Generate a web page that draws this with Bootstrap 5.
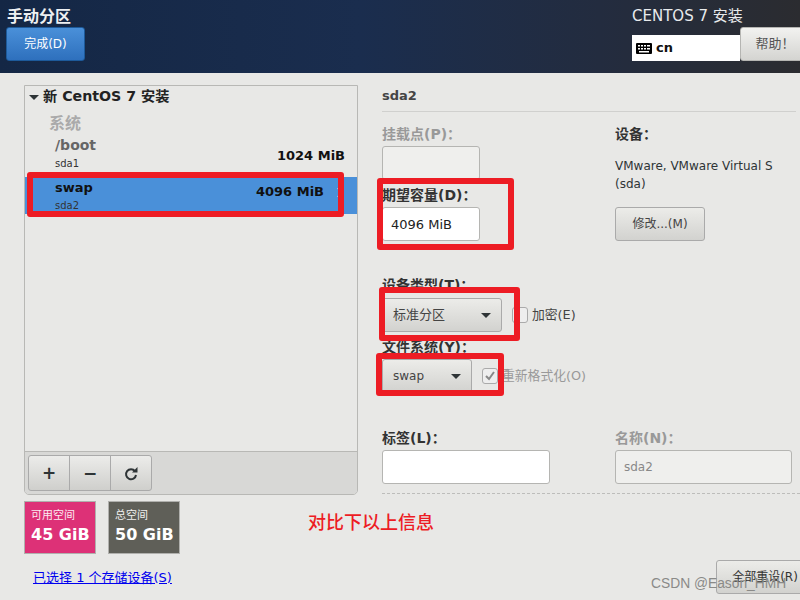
<!DOCTYPE html>
<html lang="zh">
<head>
<meta charset="utf-8">
<title>手动分区</title>
<link href="https://cdn.jsdelivr.net/npm/bootstrap@5.3.0/dist/css/bootstrap.min.css" rel="stylesheet">
<style>
html,body{width:800px;height:600px;overflow:hidden;margin:0}
body{background:#e8e8e6;font-family:"DejaVu Sans","Noto Sans CJK SC",sans-serif;font-size:12px;color:#2e3436;line-height:20px}
.stage{position:relative;width:800px;height:600px;overflow:hidden}
.top-bar{height:73px;background:linear-gradient(90deg,#142745 0%,#1a2d4e 45%,#232c3f 75%,#2b2c30 100%);color:#fff;padding:0 0 0 6px}
.top-title{font-size:16px;font-weight:700;line-height:18px;padding-top:8px;height:26px;margin-left:1px;color:#eef0f2}
.done-btn{width:79px;height:34px;margin-top:1px;padding:0;font-size:12px;color:#fff;border:1px solid #1d5a9a;border-radius:3px;background:linear-gradient(#4a90d9,#2e70bd)}
.done-btn:hover,.done-btn:active{color:#fff}
.top-right{width:168px}
.os-name{font-size:15px;line-height:18px;padding-top:7px;height:25px;color:#e8eaec;white-space:nowrap}
.lang-row{margin-top:2px;height:35px}
.lang-box{width:108px;height:26px;margin-top:8px;background:#fff;color:#111;font-weight:700;font-size:13px;padding:0 0 0 4px;flex:none;line-height:26px}
.help-btn{width:70px;height:34px;flex:none;padding:0;margin:0;font-size:13px;color:#555;border:1px solid #b5b5b2;border-radius:3px;background:linear-gradient(#f2f2f0,#d4d4d1)}
.main-area{padding:12px 0 0 24px}
.left-pane{width:334px;flex:none}
.tree{height:410px;border:1px solid #b8b8b5;border-radius:0 0 5px 5px;background:#e8e8e6}
.tree-head{font-size:14.2px;font-weight:700;color:#222;height:22px;line-height:21px;padding-left:4px;white-space:nowrap}
.tri{display:inline-block;width:0;height:0;border-left:5px solid transparent;border-right:5px solid transparent;border-top:5px solid #2e3436;vertical-align:middle}
.group-name{font-size:16px;font-weight:700;color:#aaa;padding-left:24px;line-height:20px;margin-top:6px}
.part-row{padding:0 12px 0 30px}
.part-row.first{height:44px;padding-top:2px}
.part-row.active-row{height:37px;background:#4a90d9;padding:1px 13px 0 30px;margin-top:-1px}
.part-name{font-size:14px;font-weight:700;line-height:18px;color:#666}
.active-row .part-name{color:#111;font-size:13px;line-height:20px}
.part-dev{font-size:10px;line-height:15px;margin-top:2px;color:#333}
.active-row .part-dev{margin-top:0}
.part-size{font-size:13px;font-weight:700;color:#111;margin-top:11px;line-height:18px;margin-left:auto}
.active-row .part-size{margin-top:5px}
.row-arrow{margin:9px 0 0 13px;flex:none}
.tool-row{height:43px;background:#d8d8d6;border-top:1px solid #b8b8b5;padding:3px;border-radius:0 0 4px 4px}
.tool-btn{width:42px;height:36px;padding:0;border:1px solid #aaa;border-radius:0;background:linear-gradient(#ececea,#cfcfcc);font-size:17px;font-weight:700;color:#2e3436;line-height:1}
.tool-btn:first-child{border-radius:3px 0 0 3px}
.tool-btn:last-child{border-radius:0 3px 3px 0}
.tile-row{margin-top:6px}
.space-tile{width:72px;height:53px;border:1px solid #b0b0ad;color:#fff;padding:7px 6px 0}
.tile-free{background:#dd3177}
.tile-total{background:#5f5f58;margin-left:12px}
.tile-label{font-size:11px;line-height:14px;opacity:.9}
.tile-value{font-size:16px;font-weight:700;line-height:24px;white-space:nowrap}
.dev-link{margin-top:14px;padding-left:9px;height:20px;font-size:13px;white-space:nowrap}
.dev-link a{color:#00e}
.right-pane{width:418px;flex:none;margin-left:24px}
.sec-title{height:27px;font-size:13px;font-weight:700;color:#444;line-height:22px;border-bottom:1px solid #d0d0ce;margin-right:4px}
.col-one{width:233px;flex:none}
.fld-label{font-weight:700;font-size:14px;height:20px;line-height:20px;color:#333;white-space:nowrap}
.fld-label.off{color:#999}
.fld-first{margin-top:12px}
.fld{height:34px;border:1px solid #b5b5b2;border-radius:3px;background:#fff;padding:0 8px;font-size:13px;color:#222;box-shadow:none}
.fld.w98{width:98px}
.fld.off{background:#efefed;color:#888;font-size:12px}
.fld:disabled{background:#efefed}
.combo{height:34px;border:1px solid #aaa;border-radius:3px;background:linear-gradient(#ecece9,#d2d2cf);padding:0 10px;color:#444;display:flex;align-items:center;justify-content:space-between}
.combo:hover{background:linear-gradient(#ecece9,#d2d2cf);color:#444;border-color:#aaa}
.combo-wide{width:120px;font-size:13px}
.combo-small{width:90px;font-size:12px}
.tick{width:16px;height:16px;flex:none;border:1px solid #aaa;border-radius:3px;background:#eee;margin:0 4px 0 10px;display:inline-flex;align-items:center;justify-content:center}
.tick-label{color:#444;font-size:12.8px;white-space:nowrap}
.tick-label.off{color:#999}
.plain-btn{height:34px;border:1px solid #aaa;border-radius:3px;background:linear-gradient(#ecece9,#d2d2cf);font-size:12px;color:#444;padding:0}
.dash-line{border-top:1px dashed #bdbdbb;height:0;margin-top:9px}
.reset-btn{width:98px;margin-top:66px;margin-right:-14px;color:#333;white-space:nowrap}
.stack-2{margin-top:2px}.stack-3{margin-top:3px}.stack-5{margin-top:5px}.stack-34{margin-top:34px}.stack-35{margin-top:35px}
.label-input{width:168px}
.dev-text{margin-top:13px;line-height:18px}
.change-btn{width:90px;margin-top:14px}
.name-label{margin-top:187px}
.name-input{width:177px}
.mark-red{position:absolute;border:6px solid #ed1c24;border-radius:3px;pointer-events:none}
.mark-row{left:27px;top:172px;width:317px;height:45px}
.mark-size{left:377px;top:178px;width:137px;height:72px}
.mark-type{left:379px;top:287px;width:141px;height:54px}
.mark-fs{left:376px;top:353px;width:128px;height:43px}
.note-red{position:absolute;left:308px;top:512px;color:#ed1c24;font-family:"Liberation Serif","Noto Sans CJK SC",serif;font-weight:500;font-size:18px;line-height:22px;white-space:nowrap}
.wm{position:absolute;left:651px;top:575px;color:#8a8a88;font-family:"Liberation Sans",sans-serif;font-size:13.8px;line-height:18px;white-space:nowrap}
</style>
</head>
<body>
<div class="stage">
  <header class="top-bar d-flex justify-content-between">
    <div>
      <div class="top-title">手动分区</div>
      <button class="btn done-btn" type="button">完成(D)</button>
    </div>
    <div class="top-right">
      <div class="os-name">CENTOS 7 安装</div>
      <div class="d-flex lang-row">
        <div class="lang-box d-flex align-items-center gap-1">
          <svg width="16" height="11" viewBox="0 0 16 11"><rect width="16" height="11" rx="1" fill="#000"/><g fill="#fff"><rect x="2" y="2" width="2" height="1.5"/><rect x="5" y="2" width="2" height="1.5"/><rect x="8" y="2" width="2" height="1.5"/><rect x="11" y="2" width="3" height="1.5"/><rect x="2" y="5" width="2" height="1.5"/><rect x="5" y="5" width="2" height="1.5"/><rect x="8" y="5" width="2" height="1.5"/><rect x="11" y="5" width="3" height="1.5"/><rect x="3" y="8" width="10" height="1.5"/></g></svg>
          <span>cn</span>
        </div>
        <button class="btn help-btn" type="button">帮助！</button>
      </div>
    </div>
  </header>

  <main class="main-area d-flex">
    <section class="left-pane">
      <div class="tree d-flex flex-column">
        <div class="tree-head"><span class="tri me-1"></span>新 CentOS 7 安装</div>
        <div class="flex-grow-1">
          <div class="group-name">系统</div>
          <div class="part-row first d-flex">
            <div><div class="part-name">/boot</div><div class="part-dev">sda1</div></div>
            <div class="part-size">1024 MiB</div>
          </div>
          <div class="part-row active-row d-flex">
            <div><div class="part-name">swap</div><div class="part-dev">sda2</div></div>
            <div class="part-size">4096 MiB</div>
            <svg class="row-arrow" width="7" height="11" viewBox="0 0 7 11"><path d="M1 1l5 4.5L1 10" fill="none" stroke="#fff" stroke-width="2"/></svg>
          </div>
        </div>
        <div class="tool-row d-flex">
          <div class="btn-group">
            <button class="btn tool-btn" type="button">+</button>
            <button class="btn tool-btn" type="button">−</button>
            <button class="btn tool-btn" type="button" aria-label="刷新">
              <svg width="14" height="14" viewBox="0 0 14 14"><path d="M11 4.2A5 5 0 1 0 12 8" fill="none" stroke="#2e3436" stroke-width="2"/><path d="M8 5.5h5.5V0z" fill="#2e3436"/></svg>
            </button>
          </div>
        </div>
      </div>
      <div class="d-flex tile-row">
        <div class="space-tile tile-free"><div class="tile-label">可用空间</div><div class="tile-value">45 GiB</div></div>
        <div class="space-tile tile-total"><div class="tile-label">总空间</div><div class="tile-value">50 GiB</div></div>
      </div>
      <div class="dev-link"><a href="#">已选择 1 个存储设备(S)</a></div>
    </section>

    <section class="right-pane">
      <div class="sec-title">sda2</div>
      <div class="d-flex">
        <div class="col-one">
          <div class="fld-label off fld-first">挂载点(P)：</div>
          <div class="fld w98 off stack-2"></div>
          <div class="fld-label stack-5">期望容量(D)：</div>
          <input class="form-control fld w98 stack-2" value="4096 MiB" aria-label="期望容量">
          <div class="fld-label stack-34">设备类型(T)：</div>
          <div class="d-flex align-items-center stack-3">
            <button class="btn combo combo-wide" type="button"><span>标准分区</span><span class="tri"></span></button>
            <span class="tick"></span><span class="tick-label">加密(E)</span>
          </div>
          <div class="fld-label stack-5">文件系统(Y)：</div>
          <div class="d-flex align-items-center stack-2">
            <button class="btn combo combo-small" type="button"><span>swap</span><span class="tri"></span></button>
            <span class="tick"><svg width="12" height="12" viewBox="0 0 12 12"><path d="M2 6l3 3 5-7" fill="none" stroke="#888" stroke-width="2"/></svg></span><span class="tick-label off">重新格式化(O)</span>
          </div>
          <div class="fld-label stack-35">标签(L)：</div>
          <input class="form-control fld label-input stack-2" aria-label="标签">
        </div>
        <div class="flex-grow-1">
          <div class="fld-label fld-first">设备：</div>
          <div class="dev-text">VMware, VMware Virtual S<br>(sda)</div>
          <button class="btn plain-btn change-btn" type="button">修改...(M)</button>
          <div class="fld-label off name-label">名称(N)：</div>
          <input class="form-control fld off name-input stack-2" value="sda2" disabled aria-label="名称">
        </div>
      </div>
      <div class="dash-line"></div>
      <div class="d-flex justify-content-end">
        <button class="btn plain-btn reset-btn" type="button">全部重设(R)</button>
      </div>
    </section>
  </main>

  <div class="mark-red mark-row"></div>
  <div class="mark-red mark-size"></div>
  <div class="mark-red mark-type"></div>
  <div class="mark-red mark-fs"></div>
  <div class="note-red">对比下以上信息</div>
  <div class="wm">CSDN @Eason_HMH</div>
</div>
</body>
</html>
